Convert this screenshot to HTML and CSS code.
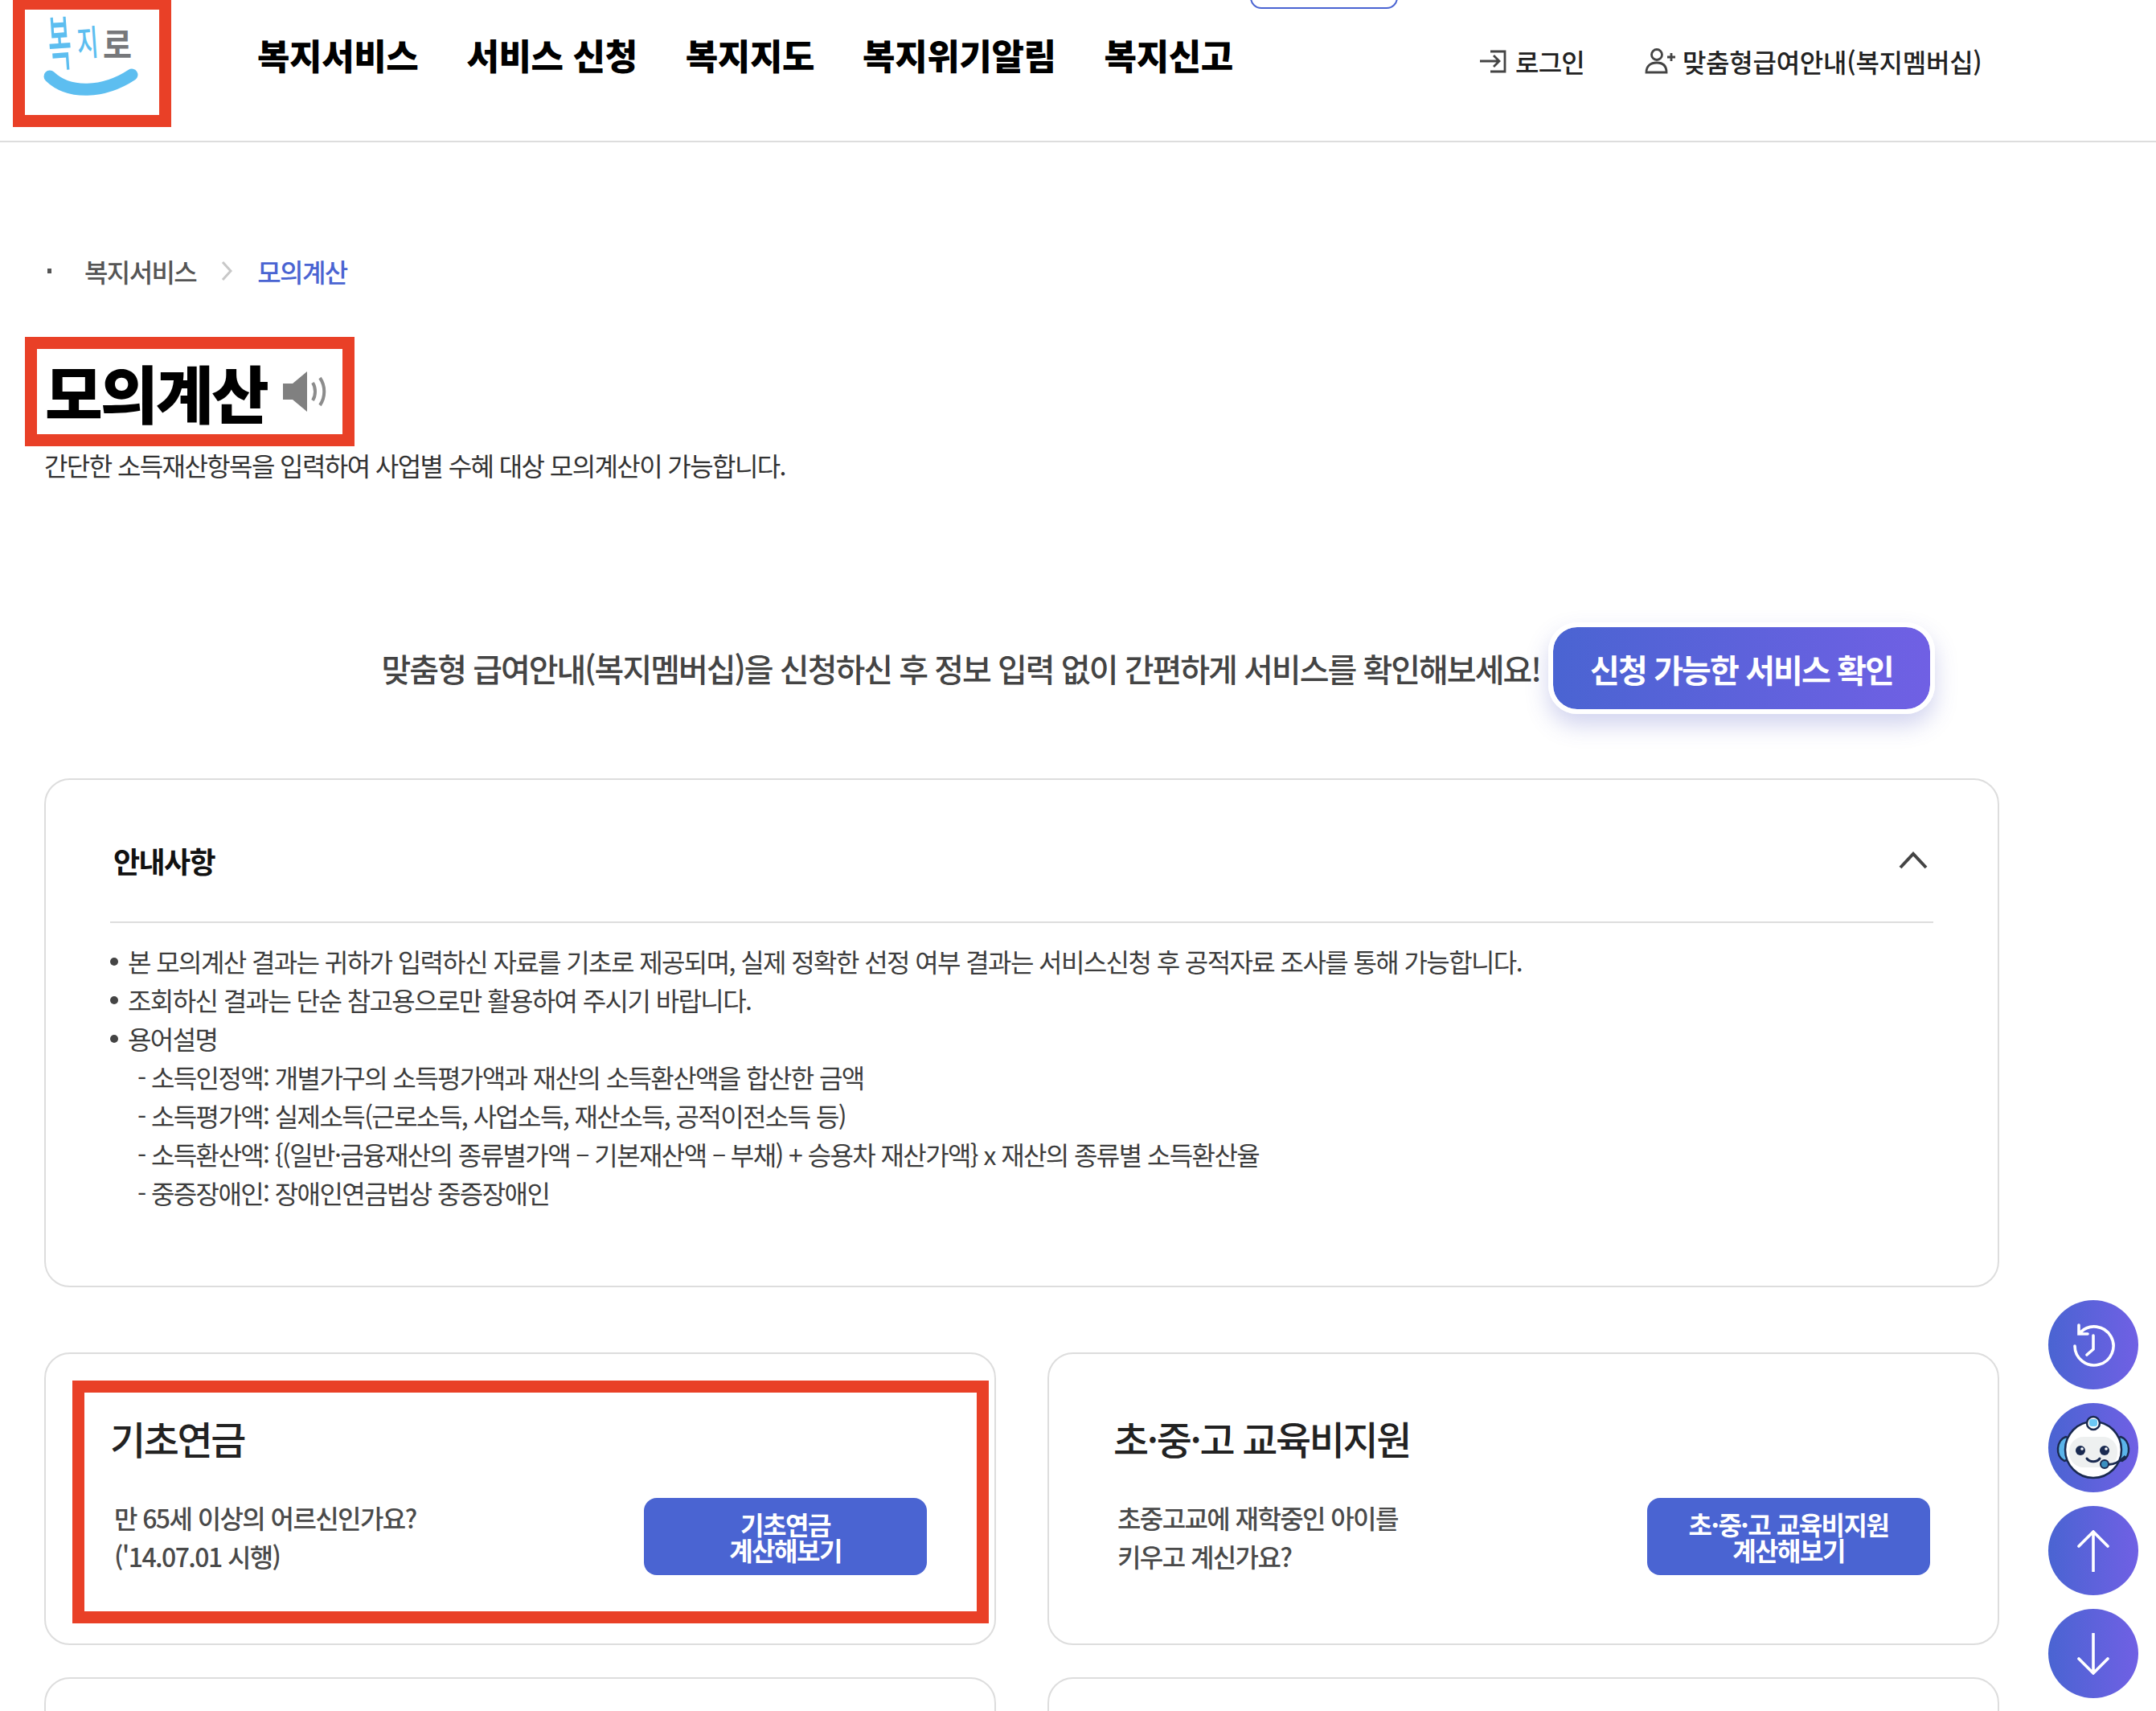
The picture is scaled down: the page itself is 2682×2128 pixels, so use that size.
FILE: index.html
```html
<!DOCTYPE html>
<html lang="ko">
<head>
<meta charset="utf-8">
<title>모의계산</title>
<link rel="stylesheet" href="styles.css">
</head>
<body>
<header class="site-header">
  <a class="logo">
    <svg class="logo-svg" viewBox="0 0 167 131" width="167" height="131">
      <text class="logo-t logo-b" transform="translate(31 70) rotate(-4) scale(0.78 1.85)">복</text>
      <text class="logo-t logo-b" transform="translate(66 58) rotate(-4) scale(0.72 1.1)">지</text>
      <text class="logo-t logo-g" transform="translate(97 60) scale(0.98 1.08)">로</text>
      <path class="logo-smile" d="M31 83 C55 106 98 104 133 81" />
    </svg>
  </a>
  <nav class="gnb">
    <a>복지서비스</a><a>서비스 신청</a><a>복지지도</a><a>복지위기알림</a><a>복지신고</a>
  </nav>
  <span class="top-tab"></span>
  <div class="util">
    <a class="util-link util-login">
      <svg viewBox="0 0 36 30" width="36" height="30" class="util-ico"><path d="M14 3H32V28H14M1 15H25M18 8L25 15L18 22"/></svg>로그인
    </a>
    <a class="util-link">
      <svg viewBox="0 0 38 32" width="38" height="32" class="util-ico"><circle cx="15" cy="8" r="6.5"/><path d="M2 30C2 22 7 18 15 18C23 18 27 22 27 30ZM28 11H38M33 6V16"/></svg>맞춤형급여안내(복지멤버십)
    </a>
  </div>
</header>

<main class="page">
  <div class="crumbs">
    <i class="crumb-dot"></i>
    <span>복지서비스</span>
    <svg viewBox="0 0 14 24" width="14" height="24" class="crumb-sep"><path d="M2 1L12 12L2 23"/></svg>
    <span class="crumb-now">모의계산</span>
  </div>

  <div class="title-box">
    <h1>모의계산</h1>
    <svg viewBox="0 0 54 50" width="54" height="50" class="speaker">
      <path class="sp-fill" d="M0 15H12L30 0V50L12 35H0Z"/>
      <path class="sp-line" d="M37 14C41 20 41 30 37 36M46 8C53 18 53 32 46 42"/>
    </svg>
  </div>
  <p class="lead">간단한 소득재산항목을 입력하여 사업별 수혜 대상 모의계산이 가능합니다.</p>

  <div class="promo">
    <span>맞춤형 급여안내(복지멤버십)을 신청하신 후 정보 입력 없이 간편하게 서비스를 확인해보세요!</span>
    <a class="promo-btn">신청 가능한 서비스 확인</a>
  </div>

  <section class="notice">
    <div class="notice-head">
      <h2>안내사항</h2>
      <svg viewBox="0 0 36 22" width="36" height="22" class="chev"><path d="M2 20L18 3L34 20"/></svg>
    </div>
    <ul class="notice-list">
      <li>본 모의계산 결과는 귀하가 입력하신 자료를 기초로 제공되며, 실제 정확한 선정 여부 결과는 서비스신청 후 공적자료 조사를 통해 가능합니다.</li>
      <li>조회하신 결과는 단순 참고용으로만 활용하여 주시기 바랍니다.</li>
      <li>용어설명</li>
      <li class="sub">- 소득인정액: 개별가구의 소득평가액과 재산의 소득환산액을 합산한 금액</li>
      <li class="sub">- 소득평가액: 실제소득(근로소득, 사업소득, 재산소득, 공적이전소득 등)</li>
      <li class="sub">- 소득환산액: {(일반·금융재산의 종류별가액 – 기본재산액 – 부채) + 승용차 재산가액} x 재산의 종류별 소득환산율</li>
      <li class="sub">- 중증장애인: 장애인연금법상 중증장애인</li>
    </ul>
  </section>

  <div class="cards">
    <article class="card">
      <div class="card-body marked">
        <h3>기초연금</h3>
        <div class="card-row">
          <p>만 65세 이상의 어르신인가요?<br>('14.07.01 시행)</p>
          <a class="calc-btn">기초연금<br>계산해보기</a>
        </div>
      </div>
    </article>
    <article class="card">
      <div class="card-body">
        <h3>초·중·고 교육비지원</h3>
        <div class="card-row">
          <p>초중고교에 재학중인 아이를<br>키우고 계신가요?</p>
          <a class="calc-btn">초·중·고 교육비지원<br>계산해보기</a>
        </div>
      </div>
    </article>
    <article class="card"><div class="card-body"></div></article>
    <article class="card"><div class="card-body"></div></article>
  </div>
</main>

<aside class="floats">
  <a class="fab">
    <svg viewBox="0 0 56 56" width="56" height="56" class="fab-ico"><path d="M5 29A24 24 0 1 0 12 12M10 3V14H21M28 16V33L20 40"/></svg>
  </a>
  <a class="fab">
    <svg viewBox="0 0 96 84" width="96" height="84">
      <path class="bot-ear" d="M14 28C2 32 0 52 12 58L18 56V30Z"/>
      <path class="bot-ear" d="M82 28C94 32 96 52 84 58L78 56V30Z"/>
      <circle class="bot-head" cx="48" cy="44" r="35"/>
      <circle class="bot-head" cx="48" cy="11" r="8"/>
      <rect class="bot-gem" x="43" y="6" width="10" height="9" rx="3"/>
      <rect class="bot-face" x="18" y="28" width="60" height="38" rx="18"/>
      <circle class="bot-eye" cx="32" cy="45" r="6"/>
      <circle class="bot-eye" cx="62" cy="45" r="6"/>
      <circle class="bot-spark" cx="34" cy="43" r="1.8"/>
      <circle class="bot-spark" cx="64" cy="43" r="1.8"/>
      <path class="bot-smile" d="M40 55C44 60 52 60 56 55"/>
      <path class="bot-mic" d="M62 62C72 64 80 60 88 52"/>
      <circle class="bot-micball" cx="62" cy="62" r="5"/>
    </svg>
  </a>
  <a class="fab">
    <svg viewBox="0 0 40 52" width="40" height="52" class="fab-ico"><path d="M20 51V2M2 20L20 2L38 20"/></svg>
  </a>
  <a class="fab">
    <svg viewBox="0 0 40 52" width="40" height="52" class="fab-ico"><path d="M20 1V50M2 32L20 50L38 32"/></svg>
  </a>
</aside>
</body>
</html>
```

FILE: styles.css
```css
* { box-sizing: border-box; margin: 0; padding: 0; }
html, body { width: 2682px; height: 2128px; overflow: hidden; background: #fff; }
body {
  position: relative;
  font-family: "Noto Sans CJK KR", "Noto Sans", sans-serif;
  color: #444;
  font-size: 32px;
}
ul { list-style: none; }

.site-header {
  height: 177px;
  border-bottom: 2px solid #ddd;
  display: flex;
  align-items: flex-start;
  padding-left: 16px;
}
.logo {
  display: block;
  width: 197px;
  height: 158px;
  border: 15px solid #e94027;
  border-top-width: 12px;
  flex: none;
}
.logo-svg { display: block; overflow: visible; }
.logo-t { font-size: 40px; font-weight: 500; font-family: "Noto Sans CJK KR", sans-serif; }
.logo-b { fill: #5dbef0; }
.logo-g { fill: #77787b; font-weight: 700; }
.logo-smile { fill: none; stroke: #5dbef0; stroke-width: 15; stroke-linecap: round; }

.gnb {
  display: flex;
  gap: 60px;
  margin-left: 107px;
  margin-top: 38px;
  font-size: 44px;
  line-height: 60px;
  font-weight: 900;
  color: #000;
  letter-spacing: -0.4px;
  white-space: nowrap;
}
.top-tab {
  position: absolute;
  left: 1555px;
  top: -20px;
  width: 184px;
  height: 31px;
  border: 2px solid #4a64d2;
  border-radius: 14px;
}
.util {
  position: absolute;
  top: 55px;
  left: 1840px;
  display: flex;
  gap: 75px;
  font-size: 32px;
  line-height: 42px;
  color: #222;
  letter-spacing: -0.25px;
  font-weight: 500;
  white-space: nowrap;
}
.util-login { letter-spacing: -0.8px; }
.util-link { display: flex; align-items: center; gap: 9px; }
.util-ico { fill: none; stroke: #444; stroke-width: 2.8; flex: none; }

.page { padding-left: 55px; width: 2487px; }

.crumbs {
  display: flex;
  align-items: center;
  margin-top: 137px;
  height: 46px;
  font-size: 32px;
  font-weight: 500;
  letter-spacing: -1.6px;
  color: #555;
}
.crumb-dot { width: 5px; height: 6px; background: #555; margin-left: 4px; margin-right: 41px; }
.crumb-sep { fill: none; stroke: #c8c8c8; stroke-width: 3; margin: 0 31px 0 31px; }
.crumb-now { color: #4a64d2; }

.title-box {
  display: inline-flex;
  align-items: center;
  margin-top: 59px;
  margin-left: -24px;
  width: 410px;
  height: 136px;
  border: 15px solid #e94027;
  padding-left: 10px;
  gap: 20px;
}
h1 {
  font-size: 78px;
  line-height: 106px;
  font-weight: 900;
  color: #000;
  letter-spacing: -2.8px;
  white-space: nowrap;
}
.speaker { flex: none; }
.sp-fill { fill: #808080; }
.sp-line { fill: none; stroke: #8c8c8c; stroke-width: 4; }
.lead {
  margin-top: 0;
  line-height: 46px;
  font-size: 32px;
  letter-spacing: -1.6px;
  color: #333;
  white-space: nowrap;
}

.promo {
  margin-top: 173px;
  display: flex;
  justify-content: flex-end;
  align-items: center;
  gap: 10px;
  padding-right: 80px;
  font-size: 40px;
  letter-spacing: -2px;
  color: #444;
  font-weight: 500;
  white-space: nowrap;
}
.promo-btn {
  display: flex;
  align-items: center;
  justify-content: center;
  width: 481px;
  height: 114px;
  padding-top: 2px;
  border: 6px solid #fff;
  border-radius: 36px;
  background: linear-gradient(90deg, #4a64d2, #7060e4) padding-box;
  color: #fff;
  font-size: 40px;
  font-weight: 700;
  letter-spacing: -1.9px;
  box-shadow: 0 14px 28px rgba(74, 84, 190, .25);
}

.notice {
  margin-top: 80px;
  height: 633px;
  border: 2px solid #ddd;
  border-radius: 32px;
  padding: 0 80px 0 80px;
}
.notice-head {
  height: 178px;
  display: flex;
  align-items: center;
  justify-content: space-between;
  border-bottom: 2px solid #ddd;
  padding: 24px 7px 0 4px;
  margin-bottom: 23px;
}
h2 {
  font-size: 36px;
  font-weight: 700;
  color: #111;
  letter-spacing: -1.6px;
}
.chev { fill: none; stroke: #444; stroke-width: 4; }
.notice-list { font-size: 32px; line-height: 48px; letter-spacing: -1.6px; color: #3c3c3c; white-space: nowrap; }
.notice-list li { position: relative; padding-left: 22px; }
.notice-list li::before {
  content: "";
  position: absolute;
  left: 0;
  top: 20px;
  width: 10px;
  height: 10px;
  border-radius: 50%;
  background: #444;
}
.notice-list .sub { padding-left: 34px; }
.notice-list .sub::before { display: none; }

.cards {
  margin-top: 81px;
  display: grid;
  grid-template-columns: 1184px 1184px;
  gap: 40px 64px;
}
.card {
  height: 364px;
  border: 2px solid #ddd;
  border-radius: 32px;
  padding: 33px 7px 0 33px;
}
.card-body {
  width: 1140px;
  height: 302px;
  border: 15px solid transparent;
  padding: 26px 63px 0 32px;
}
.marked { border-color: #e94027; }
h3 {
  font-size: 48px;
  line-height: 60px;
  font-weight: 500;
  color: #222;
  letter-spacing: -2.4px;
  white-space: nowrap;
}
.card-row {
  margin-top: 45px;
  display: flex;
  justify-content: space-between;
  align-items: center;
  margin-right: -1px;
}
.card-row p {
  margin-left: 5px;
  font-size: 32px;
  font-weight: 500;
  line-height: 48px;
  letter-spacing: -1.6px;
  color: #4a4a4a;
  white-space: nowrap;
}
.calc-btn {
  width: 352px;
  height: 96px;
  display: flex;
  align-items: center;
  justify-content: center;
  text-align: center;
  border-radius: 16px;
  background: #4a64d2;
  color: #fff;
  font-size: 32px;
  line-height: 32px;
  font-weight: 700;
  letter-spacing: -1.5px;
}

.floats {
  position: absolute;
  left: 2548px;
  top: 1617px;
  display: flex;
  flex-direction: column;
  gap: 17px;
}
.fab {
  width: 112px;
  height: 111px;
  border-radius: 50%;
  background: linear-gradient(90deg, #4a64d2, #7060e4);
  display: flex;
  align-items: center;
  justify-content: center;
}
.fab-ico { fill: none; stroke: #fff; stroke-width: 3.6; stroke-linecap: round; }
.bot-ear { fill: #5bb4ea; stroke: #1a2a50; stroke-width: 2.5; }
.bot-head { fill: #fff; stroke: #1a2a50; stroke-width: 2.5; }
.bot-gem { fill: #6cc8f5; }
.bot-face { fill: #eef0f0; }
.bot-eye { fill: #1a2a50; }
.bot-spark { fill: #fff; }
.bot-smile { fill: none; stroke: #1a2a50; stroke-width: 3; stroke-linecap: round; }
.bot-mic { fill: none; stroke: #1a2a50; stroke-width: 3; }
.bot-micball { fill: #3a8fc0; stroke: #1a2a50; stroke-width: 2; }
```
